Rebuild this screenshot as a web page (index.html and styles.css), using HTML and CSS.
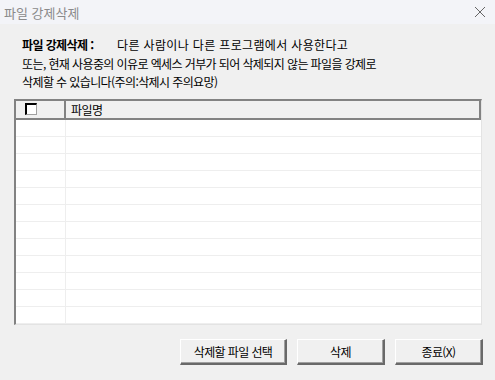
FILE: index.html
```html
<!DOCTYPE html>
<html lang="ko">
<head>
    <meta charset="UTF-8">
    <title>파일 강제삭제</title>
    <link rel="stylesheet" href="styles.css">
</head>
<body>
    <div class="window">
        <!-- Title bar -->
        <div class="titlebar">
            <span class="title">파일 강제삭제</span>
            <span class="close">
                <svg width="12" height="12" viewBox="0 0 12 12">
                    <path d="M1 1 L11 11 M11 1 L1 11" stroke="#666" stroke-width="1" fill="none"/>
                </svg>
            </span>
        </div>

        <!-- Description -->
        <div class="desc">
            <p class="line"><b class="label">파일 강제삭제 :</b><span class="lead">다른 사람이나 다른 프로그램에서 사용한다고</span></p>
            <p class="line">또는, 현재 사용중의 이유로 엑세스 거부가 되어 삭제되지 않는 파일을 강제로</p>
            <p class="line">삭제할 수 있습니다(주의:삭제시 주의요망)</p>
        </div>

        <!-- File list -->
        <div class="list">
            <div class="list-head">
                <div class="col-check"><span class="checkbox"></span></div>
                <div class="col-name">파일명</div>
            </div>
            <div class="list-body" id="list-body"></div>
        </div>

        <!-- Buttons -->
        <div class="buttons">
            <button class="btn btn-wide">삭제할 파일 선택</button>
            <button class="btn">삭제</button>
            <button class="btn">종료(X)</button>
        </div>
    </div>

    <script>
        // empty rows of the list
        var body = document.getElementById("list-body");
        for (var i = 0; i < 12; i++) {
            var row = document.createElement("div");
            row.className = "row";
            row.innerHTML = '<div class="cell-check"></div><div class="cell-name"></div>';
            body.appendChild(row);
        }
    </script>
</body>
</html>
```

FILE: styles.css
```css
/* Global Reset */
* {
    margin: 0;
    padding: 0;
    box-sizing: border-box;
}

body {
    font-family: 'Noto Sans CJK KR', 'Liberation Sans', sans-serif;
    font-size: 12px;
    color: #000;
    background-color: #f0f0f0;
    width: 495px;
    height: 380px;
    overflow: hidden;
}

.window {
    width: 495px;
    height: 380px;
    background-color: #f0f0f0;
    display: flex;
    flex-direction: column;
}

/* Title bar */
.titlebar {
    height: 24px;
    background-color: #f3f4f8;
    display: flex;
    align-items: center;
    justify-content: space-between;
    padding: 0 9px 0 4px;
}

.title {
    color: #8a8a8a;
    font-size: 13px;
}

.close {
    display: flex;
    align-items: center;
}

/* Description text */
.desc {
    padding: 12px 0 0 22px;
    letter-spacing: -0.6px;
}

.line {
    height: 18.5px;
    line-height: 18px;
    white-space: nowrap;
}

.label {
    display: inline-block;
    width: 95px;
}

.lead {
    letter-spacing: 0.35px;
}

/* File list */
.list {
    margin: 7px 0 0 14px;
    width: 468px;
    height: 226px;
    border-top: 2px solid #828282;
    border-left: 2px solid #828282;
    border-right: 1px solid #e3e3e3;
    border-bottom: 1px solid #e3e3e3;
    background-color: #fff;
    overflow: hidden;
}

.list-head {
    display: flex;
    height: 19px;
    background-color: #f0f0f0;
    border-bottom: 2px solid #828282;
    border-right: 2px solid #828282;
}

.col-check {
    width: 50px;
    border-right: 2px solid #828282;
    display: flex;
    align-items: center;
    padding-left: 9px;
}

.checkbox {
    width: 12px;
    height: 12px;
    border-top: 2px solid #000;
    border-left: 2px solid #000;
    border-right: 1px solid #a0a0a0;
    border-bottom: 1px solid #a0a0a0;
    background-color: #fff;
}

.col-name {
    padding-left: 5px;
    line-height: 17px;
    letter-spacing: -0.6px;
}

.row {
    display: flex;
    height: 17px;
    border-bottom: 1px solid #eeeeee;
}

.cell-check {
    width: 50px;
    border-right: 1px solid #eeeeee;
}

/* Buttons */
.buttons {
    display: flex;
    justify-content: flex-end;
    gap: 10px;
    padding: 14px 12px 0 0;
}

.btn {
    font-family: 'Noto Sans CJK KR', 'Liberation Sans', sans-serif;
    font-size: 12px;
    letter-spacing: -0.6px;
    width: 88px;
    height: 26px;
    background-color: #f0f0f0;
    border-top: 1px solid #fff;
    border-left: 1px solid #fff;
    border-right: 2px solid #696969;
    border-bottom: 2px solid #696969;
    box-shadow: inset -1px -1px 0 #a0a0a0;
}

.btn-wide {
    width: 107px;
}
```
